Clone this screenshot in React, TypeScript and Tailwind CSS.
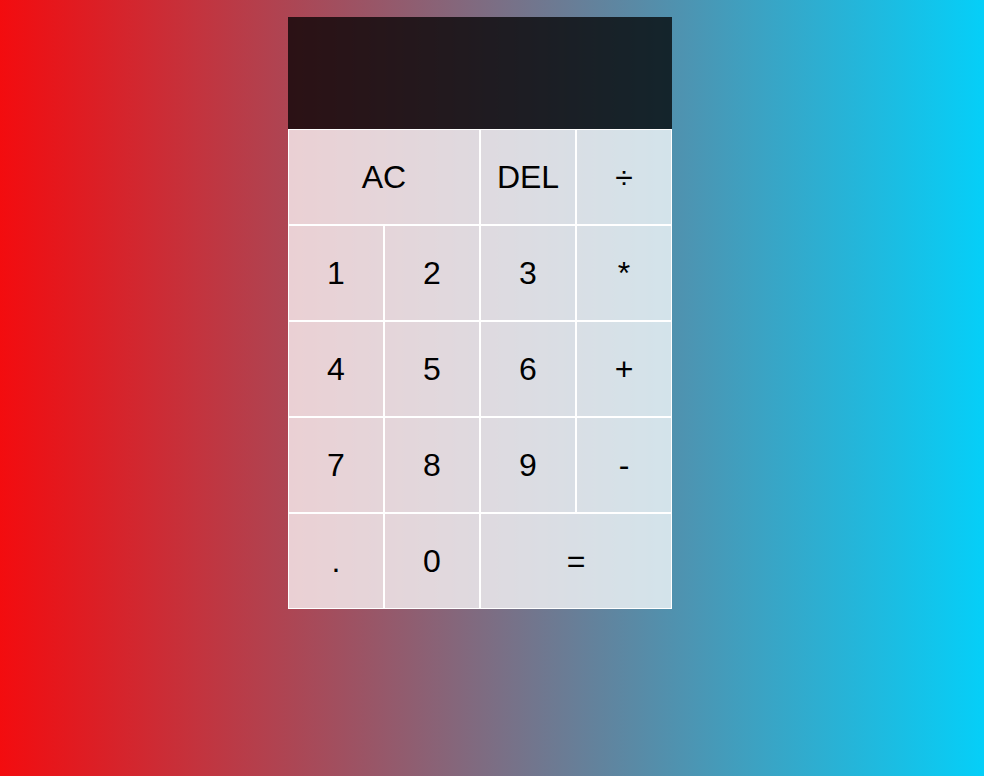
const keys: { label: string; span?: boolean }[] = [
  { label: 'AC', span: true },
  { label: 'DEL' },
  { label: '÷' },
  { label: '1' },
  { label: '2' },
  { label: '3' },
  { label: '*' },
  { label: '4' },
  { label: '5' },
  { label: '6' },
  { label: '+' },
  { label: '7' },
  { label: '8' },
  { label: '9' },
  { label: '-' },
  { label: '.' },
  { label: '0' },
  { label: '=', span: true },
];

export default function App() {
  return (
    <div
      className="min-h-screen w-full bg-[linear-gradient(to_right,#f30c0f,#05cff8)]"
      style={{ fontFamily: '"Liberation Sans", Arial, sans-serif' }}
    >
      <div className="grid grid-cols-[repeat(4,96px)] grid-rows-[112px_repeat(5,96px)] justify-center pt-[17px] pr-6">
        {/* Display */}
        <div className="col-span-4 bg-black/75" />
        {keys.map((key, i) => (
          <button
            key={i}
            className={`border border-white bg-white/75 text-[32px] text-black outline-none ${
              key.span ? 'col-span-2' : ''
            }`}
          >
            {key.label}
          </button>
        ))}
      </div>
    </div>
  );
}
